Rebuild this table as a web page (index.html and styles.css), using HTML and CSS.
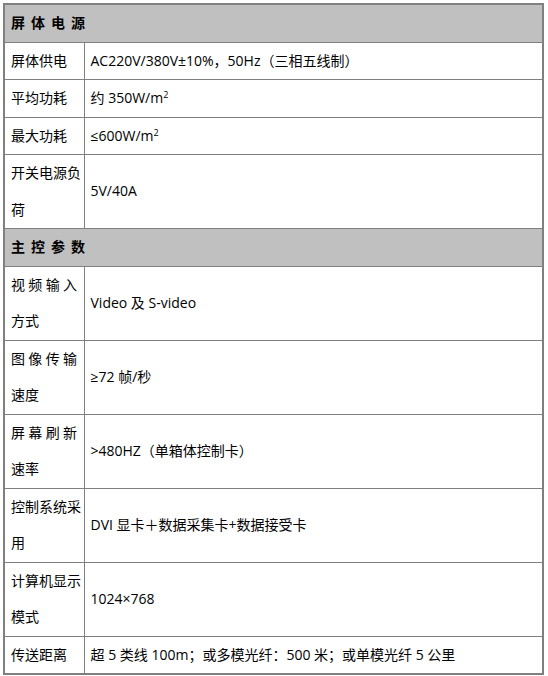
FILE: index.html
```html
<!DOCTYPE html>
<html lang="zh-CN">
<head>
<meta charset="utf-8">
<link rel="stylesheet" href="styles.css">
</head>
<body>
<table class="spec">
  <colgroup><col class="c1"><col class="c2"></colgroup>
  <tr class="head"><td colspan="2"><span class="ht">屏体电源</span></td></tr>
  <tr><td class="k">屏体供电</td><td class="v">AC220V/380V±10%，50Hz（三相五线制）</td></tr>
  <tr><td class="k">平均功耗</td><td class="v">约 350W/m<sup>2</sup></td></tr>
  <tr><td class="k">最大功耗</td><td class="v">≤600W/m<sup>2</sup></td></tr>
  <tr><td class="k">开关电源负荷</td><td class="v">5V/40A</td></tr>
  <tr class="head"><td colspan="2"><span class="ht">主控参数</span></td></tr>
  <tr><td class="k"><span class="spread">视频输入</span>方式</td><td class="v">Video 及 S-video</td></tr>
  <tr><td class="k"><span class="spread">图像传输</span>速度</td><td class="v">≥72 帧/秒</td></tr>
  <tr><td class="k"><span class="spread">屏幕刷新</span>速率</td><td class="v">&gt;480HZ（单箱体控制卡）</td></tr>
  <tr><td class="k">控制系统采用</td><td class="v">DVI 显卡＋数据采集卡+数据接受卡</td></tr>
  <tr><td class="k">计算机显示模式</td><td class="v">1024×768</td></tr>
  <tr class="last"><td class="k">传送距离</td><td class="v">超 5 类线 100m；或多模光纤：500 米；或单模光纤 5 公里</td></tr>
</table>
</body>
</html>
```
FILE: styles.css
```css
html, body {
  margin: 0;
  padding: 0;
  background: #fff;
}
body {
  padding: 3px 0 0 3px;
  font-family: "Open Sans", "Noto Sans CJK SC", sans-serif;
  font-size: 14px;
  color: #000;
}
.spec {
  border-collapse: collapse;
  width: 541px;
  border: 2px solid #808080;
  table-layout: fixed;
}
.c1 { width: 80px; }
.spec td {
  border: 1px solid #808080;
  line-height: 36.5px;
  padding: 0 6px;
  vertical-align: middle;
}
.spec td.k {
  padding: 0 2px 0 6px;
  word-break: break-all;
}
.head td {
  background: #c0c0c0;
  font-weight: bold;
}
.ht {
  letter-spacing: 6px;
}
.spread {
  display: block;
  width: 66px;
  text-align: justify;
  text-align-last: justify;
}
sup {
  font-size: 9px;
  line-height: 0;
  vertical-align: 5px;
}
```
